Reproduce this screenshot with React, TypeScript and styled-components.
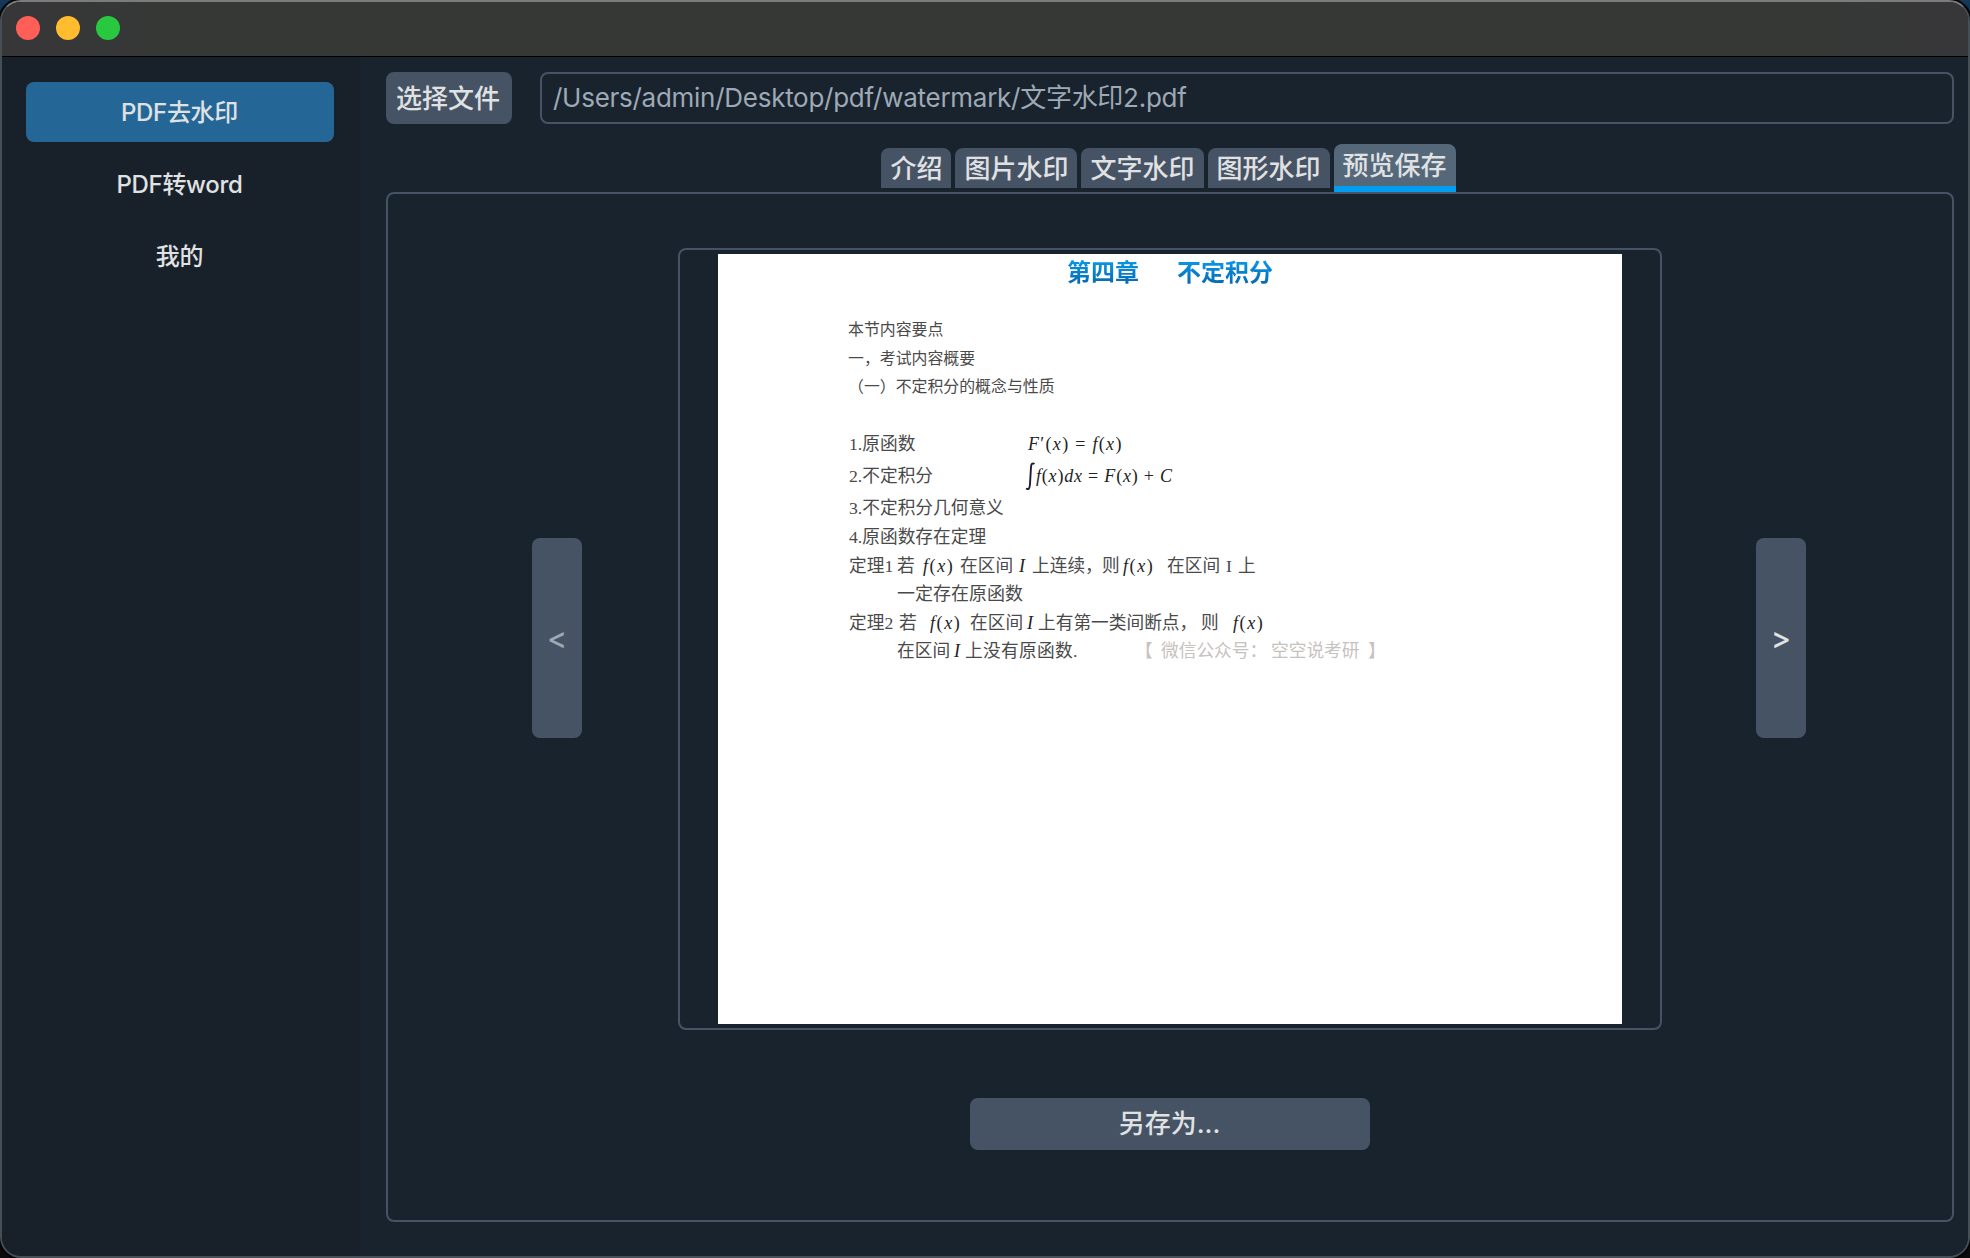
import React from "react";
import styled, { createGlobalStyle } from "styled-components";

const Global = createGlobalStyle`
  * { box-sizing: border-box; }
  html, body { height: 1258px; overflow: hidden; }
  body {
    margin: 0;
    background: linear-gradient(#14395a 0, #0d2740 40px, #0b0b0c 80px);
    font-family: Inter, "Noto Sans CJK SC", sans-serif;
    color: #e0e1e3;
  }
  button { font: inherit; color: inherit; border: 0; padding: 0; margin: 0; }
`;

const Window = styled.div`
  width: 1970px;
  height: 1258px;
  display: flex;
  flex-direction: column;
  overflow: hidden;
  border: 2px solid #464f56;
  border-top-color: #7a7c7b;
  border-radius: 21px;
  background: #19232d;
  box-shadow: 0 0 0 2px #050505;
`;

const TitleBar = styled.header`
  flex: none;
  height: 55px;
  display: flex;
  gap: 16px;
  padding: 14px 14px 0;
  background: linear-gradient(90deg, #373639 0, #363836 160px, #363836 1820px, #373639 100%);
  border-bottom: 1px solid #000;
`;

const Light = styled.span<{ $color: string }>`
  width: 24px;
  height: 24px;
  border-radius: 50%;
  background: ${(p) => p.$color};
`;

const Body = styled.div`
  flex: 1;
  display: flex;
  min-height: 0;
`;

const Sidebar = styled.nav`
  width: 358px;
  display: flex;
  flex-direction: column;
  gap: 12px;
  padding: 25px 26px 0 24px;
  background: #18212a;
`;

const NavItem = styled.button<{ $active?: boolean }>`
  height: 60px;
  padding-right: 1px;
  border-radius: 8px;
  background: ${(p) => (p.$active ? "#246797" : "transparent")};
  font-size: 24px;
  font-weight: 500;
  line-height: 61px;
  letter-spacing: -0.3px;
`;

const Main = styled.main`
  flex: 1;
  display: flex;
  flex-direction: column;
  padding: 15px 14px 34px 26px;
  background: #19232d;
`;

const FileRow = styled.div`
  flex: none;
  display: flex;
  gap: 28px;
  height: 52px;
  font-size: 26px;
`;

const PickButton = styled.button`
  width: 126px;
  padding-right: 2px;
  border-radius: 8px;
  background: #455364;
  font-weight: 500;
  line-height: 54px;
`;

const PathField = styled.div`
  flex: 1;
  padding-left: 11px;
  border: 2px solid #455364;
  border-radius: 8px;
  color: #9da9b5;
  line-height: 48px;
  white-space: pre;
  letter-spacing: -0.27px;
`;

const Tabs = styled.div`
  flex: none;
  height: 68px;
  padding: 20px 3px 0 0;
  display: flex;
  justify-content: center;
  align-items: flex-start;
  gap: 4px;
  font-size: 26px;
  font-weight: 500;
`;

const Tab = styled.button<{ $active?: boolean }>`
  height: ${(p) => (p.$active ? 48 : 40)}px;
  margin-top: ${(p) => (p.$active ? 0 : 4)}px;
  padding: 0 9px;
  border-radius: 8px 8px 0 0;
  background: ${(p) => (p.$active ? "#54687a" : "#455364")};
  border-bottom: ${(p) => (p.$active ? "6px solid #009df1" : "0")};
  line-height: ${(p) => (p.$active ? 43 : 41)}px;
`;

const Panel = styled.section`
  flex: 1;
  display: flex;
  flex-direction: column;
  align-items: center;
  padding-top: 54px;
  border: 2px solid #455364;
  border-radius: 8px;
`;

const Viewer = styled.div`
  display: flex;
  align-items: flex-start;
  gap: 96px;
  height: 782px;
  padding-right: 2px;
`;

const PageButton = styled.button<{ $dim?: boolean }>`
  width: 50px;
  height: 200px;
  margin-top: 290px;
  border-radius: 8px;
  background: #455364;
  color: ${(p) => (p.$dim ? "#9da9b5" : "#e0e1e3")};
  font-size: 30px;
  font-weight: 500;
`;

const Frame = styled.div`
  width: 984px;
  height: 782px;
  margin-right: -2px;
  padding: 4px 38px;
  border: 2px solid #455364;
  border-radius: 8px;
`;

const Page = styled.article`
  height: 770px;
  padding-left: 130px;
  background: #fff;
  color: #4a4a4a;
`;

const Title = styled.h1`
  margin: 0 0 0 -130px;
  padding: 4px 0 0;
  height: 62px;
  display: flex;
  justify-content: center;
  gap: 38px;
  font-size: 24px;
  line-height: 30px;
  font-weight: 700;

  span {
    height: 30px;
    color: transparent;
    background: linear-gradient(#0a93e2 15%, #0568b0 90%);
    background-clip: text;
    -webkit-background-clip: text;
  }
`;

const Line = styled.div<{ $h: number; $size?: number; $indent?: number }>`
  display: flex;
  align-items: center;
  height: ${(p) => p.$h}px;
  padding-left: ${(p) => p.$indent ?? 0}px;
  font-family: "Liberation Serif", "Noto Sans CJK SC", serif;
  font-size: ${(p) => p.$size ?? 17.7}px;
  line-height: 28px;
  white-space: pre;
`;

const Seg = styled.span<{ $w: number; $squeeze?: number; $light?: boolean }>`
  flex: none;
  width: ${(p) => p.$w}px;
  letter-spacing: ${(p) => p.$squeeze ?? 0}px;
  color: ${(p) => (p.$light ? "#c6c2c0" : "inherit")};
`;

const Formula = styled(Seg)`
  font-style: italic;
  font-size: 18px;
  color: #222;

  b { font-weight: 400; font-style: normal; }
`;

const Integral = styled.svg`
  flex: none;
  width: 11px;
  height: 30px;
`;

const SaveButton = styled.button`
  width: 400px;
  height: 52px;
  margin-top: 68px;
  padding-right: 1px;
  border-radius: 8px;
  background: #455364;
  font-size: 26px;
  font-weight: 500;
  line-height: 52px;
`;

const Fx = ({ w }: { w: number }) => (
  <Formula $w={w} $squeeze={1.6}>
    f<b>(</b>x<b>)</b>
  </Formula>
);

const tabs = ["介绍", "图片水印", "文字水印", "图形水印", "预览保存"];

function Document() {
  return (
    <Page>
      <Title>
        <span>第四章</span>
        <span>不定积分</span>
      </Title>
      <Line $h={28} $size={15.9}>本节内容要点</Line>
      <Line $h={29} $size={15.9}>一，考试内容概要</Line>
      <Line $h={28} $size={15.9}>（一）不定积分的概念与性质</Line>
      <Line $h={28} />
      <Line $h={29} $indent={1}>
        <Seg $w={179}>1.原函数</Seg>
        <Formula $w={110} $squeeze={1.3}>
          F<b>′(</b>x<b>)</b> <b>=</b> f<b>(</b>x<b>)</b>
        </Formula>
      </Line>
      <Line $h={35} $indent={1}>
        <Seg $w={176}>2.不定积分</Seg>
        <Integral viewBox="0 0 11 30">
          <path d="M9.500 3C7.500 1.500 6.200 2.800 6 6L5 23C4.800 27.500 3.500 29 1 27.500" fill="none" stroke="#1c1c30" strokeWidth="1.900" />
        </Integral>
        <Formula $w={160} $squeeze={0.8}>
          f<b>(</b>x<b>)</b>dx <b>=</b> F<b>(</b>x<b>)</b> <b>+</b> C
        </Formula>
      </Line>
      <Line $h={30} $indent={1}>3.不定积分几何意义</Line>
      <Line $h={28} $indent={1}>4.原函数存在定理</Line>
      <Line $h={29} $indent={1}>
        <Seg $w={48}>定理1</Seg>
        <Seg $w={26}>若</Seg>
        <Fx w={37} />
        <Seg $w={59}>在区间</Seg>
        <Formula $w={13}>I</Formula>
        <Seg $w={70}>上连续，</Seg>
        <Seg $w={21}>则</Seg>
        <Fx w={44} />
        <Seg $w={59}>在区间</Seg>
        <Seg $w={12}>I</Seg>
        <Seg $w={20}>上</Seg>
      </Line>
      <Line $h={28} $indent={49} $size={18}>一定存在原函数</Line>
      <Line $h={29} $indent={1}>
        <Seg $w={50}>定理2</Seg>
        <Seg $w={31}>若</Seg>
        <Fx w={40} />
        <Seg $w={57}>在区间</Seg>
        <Formula $w={11}>I</Formula>
        <Seg $w={163}>上有第一类间断点，</Seg>
        <Seg $w={32}>则</Seg>
        <Fx w={40} />
      </Line>
      <Line $h={28} $indent={49}>
        <Seg $w={57}>在区间</Seg>
        <Formula $w={11}>I</Formula>
        <Seg $w={170} $squeeze={0.3}>上没有原函数.</Seg>
        <Seg $w={26} $light>【</Seg>
        <Seg $w={110} $light>微信公众号：</Seg>
        <Seg $w={97} $light>空空说考研</Seg>
        <Seg $w={18} $light>】</Seg>
      </Line>
    </Page>
  );
}

export default function App() {
  return (
    <>
      <Global />
      <Window>
        <TitleBar>
          <Light $color="#ff5f57" />
          <Light $color="#febc2e" />
          <Light $color="#28c840" />
        </TitleBar>
        <Body>
          <Sidebar>
            <NavItem $active>PDF去水印</NavItem>
            <NavItem>PDF转word</NavItem>
            <NavItem>我的</NavItem>
          </Sidebar>
          <Main>
            <FileRow>
              <PickButton>选择文件</PickButton>
              <PathField>/Users/admin/Desktop/pdf/watermark/文字水印2.pdf</PathField>
            </FileRow>
            <Tabs>
              {tabs.map((t, i) => (
                <Tab key={t} $active={i === 4}>{t}</Tab>
              ))}
            </Tabs>
            <Panel>
              <Viewer>
                <PageButton $dim>&lt;</PageButton>
                <Frame>
                  <Document />
                </Frame>
                <PageButton>&gt;</PageButton>
              </Viewer>
              <SaveButton>另存为...</SaveButton>
            </Panel>
          </Main>
        </Body>
      </Window>
    </>
  );
}
